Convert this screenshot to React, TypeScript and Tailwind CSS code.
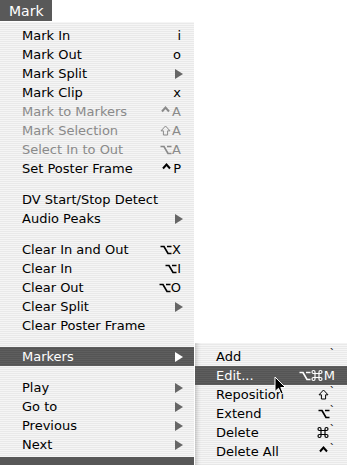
type Key = "ctrl" | "shift" | "opt" | "cmd";

interface Item {
  label: string;
  keys?: (Key | string)[];
  sub?: boolean;
  off?: boolean;
  hot?: boolean;
}

type Group = Item[];

const MAIN: Group[] = [
  [
    { label: "Mark In", keys: ["i"] },
    { label: "Mark Out", keys: ["o"] },
    { label: "Mark Split", sub: true },
    { label: "Mark Clip", keys: ["x"] },
    { label: "Mark to Markers", keys: ["ctrl", "A"], off: true },
    { label: "Mark Selection", keys: ["shift", "A"], off: true },
    { label: "Select In to Out", keys: ["opt", "A"], off: true },
    { label: "Set Poster Frame", keys: ["ctrl", "P"] },
  ],
  [
    { label: "DV Start/Stop Detect" },
    { label: "Audio Peaks", sub: true },
  ],
  [
    { label: "Clear In and Out", keys: ["opt", "X"] },
    { label: "Clear In", keys: ["opt", "I"] },
    { label: "Clear Out", keys: ["opt", "O"] },
    { label: "Clear Split", sub: true },
    { label: "Clear Poster Frame" },
  ],
  [{ label: "Markers", sub: true, hot: true }],
  [
    { label: "Play", sub: true },
    { label: "Go to", sub: true },
    { label: "Previous", sub: true },
    { label: "Next", sub: true },
  ],
];

const MARKERS: Item[] = [
  { label: "Add", keys: ["`"] },
  { label: "Edit...", keys: ["opt", "cmd", "M"], hot: true },
  { label: "Reposition", keys: ["shift", "`"] },
  { label: "Extend", keys: ["opt", "`"] },
  { label: "Delete", keys: ["cmd", "`"] },
  { label: "Delete All", keys: ["ctrl", "`"] },
];

const STRIPES =
  "bg-[repeating-linear-gradient(180deg,#f5f5f5_0px,#f5f5f5_1px,#e9e9e9_1px,#e9e9e9_2px)]";
const HOT =
  "bg-[repeating-linear-gradient(180deg,#5e5e5e_0px,#5e5e5e_1px,#555555_1px,#555555_2px)] text-white";

function Glyph({ k }: { k: Key | string }) {
  if (k === "ctrl")
    return (
      <svg width="9" height="13" viewBox="0 0 9 13" className="mr-[2px]">
        <path d="M1 6.5 L4.5 2.5 L8 6.5" stroke="currentColor" strokeWidth="2" fill="none" />
      </svg>
    );
  if (k === "shift")
    return (
      <svg width="11" height="13" viewBox="0 0 11 13" className="mr-[1px]">
        <path d="M5.5 2 L10 6.8 L7.6 6.8 L7.6 11 L3.4 11 L3.4 6.8 L1 6.8 Z" stroke="currentColor" strokeWidth="1" fill="none" />
      </svg>
    );
  if (k === "opt")
    return (
      <svg width="12" height="13" viewBox="0 0 12 13">
        <path d="M0.5 3.5 H4 L8 10.5 H11.5 M7 3.5 H11.5" stroke="currentColor" strokeWidth="1.7" fill="none" />
      </svg>
    );
  if (k === "cmd")
    return (
      <svg width="12" height="13" viewBox="0 0 12 13" className="mr-[1px]">
        <path
          d="M4 4.5 H8 V8.5 H4 Z M4 4.5 V3 A1.5 1.5 0 1 0 2.5 4.5 H4 M8 4.5 V3 A1.5 1.5 0 1 1 9.5 4.5 H8 M8 8.5 V10 A1.5 1.5 0 1 0 9.5 8.5 H8 M4 8.5 V10 A1.5 1.5 0 1 1 2.5 8.5 H4"
          stroke="currentColor"
          strokeWidth="1.2"
          fill="none"
        />
      </svg>
    );
  if (k === "`") return <span className="relative -top-[3px] text-[11px]">`</span>;
  return <span>{k}</span>;
}

function Row({ item, pl, pr }: { item: Item; pl: string; pr: string }) {
  const tone = item.hot ? HOT : item.off ? "text-[#8a8a8a]" : "text-black";
  return (
    <div className={`flex h-[19px] items-center justify-between ${pl} ${pr} ${tone}`}>
      <span className="whitespace-nowrap">{item.label}</span>
      {item.sub ? (
        <svg width="8" height="10" viewBox="0 0 8 10" className="mr-[-2px]">
          <polygon points="0,0 8,5 0,10" fill={item.hot ? "#ffffff" : "#666666"} />
        </svg>
      ) : (
        <span className="flex items-center whitespace-nowrap">
          {(item.keys ?? []).map((k, i) => (
            <Glyph key={i} k={k} />
          ))}
        </span>
      )}
    </div>
  );
}

export default function App() {
  return (
    <div
      style={{ fontFamily: '"DejaVu Sans", "Noto Sans", sans-serif' }}
      className="relative flex h-[465px] w-[347px] flex-col overflow-hidden bg-white text-[13px] leading-none"
    >
      {/* menu bar title */}
      <div className="flex h-[22px] shrink-0">
        <div className="flex h-[21px] w-[52px] items-center bg-[#595959] pl-[9px] text-[14px] text-white">Mark</div>
      </div>

      <div className="flex flex-1">
        {/* Mark menu */}
        <div className={`relative z-0 flex w-[194px] flex-col pt-[4px] ${STRIPES}`}>
          {MAIN.map((group, gi) => (
            <div key={gi} className={gi > 0 ? "mt-[12px]" : ""}>
              {group.map((item) => (
                <Row key={item.label} item={item} pl="pl-[22px]" pr="pr-[13px]" />
              ))}
            </div>
          ))}
          <div className="mt-auto h-[8px] bg-[#575757]" />
        </div>

        {/* Markers submenu */}
        <div
          className={`relative z-10 mt-[321px] ml-[1px] flex flex-1 flex-col pt-[4px] shadow-[inset_5px_0_5px_-4px_rgba(0,0,0,0.25)] ${STRIPES}`}
        >
          {MARKERS.map((item) => (
            <Row key={item.label} item={item} pl="pl-[21px]" pr="pr-[12px]" />
          ))}
        </div>
      </div>

      {/* mouse pointer */}
      <svg width="13" height="20" viewBox="0 0 13 20" className="absolute left-[274px] top-[376px] z-20">
        <path
          d="M1 1 L1 15.5 L4.5 12.3 L7 18 L9.2 17 L6.8 11.5 L11.5 11.5 Z"
          fill="#000000"
          stroke="#ffffff"
          strokeWidth="1"
          strokeLinejoin="round"
        />
      </svg>
    </div>
  );
}
